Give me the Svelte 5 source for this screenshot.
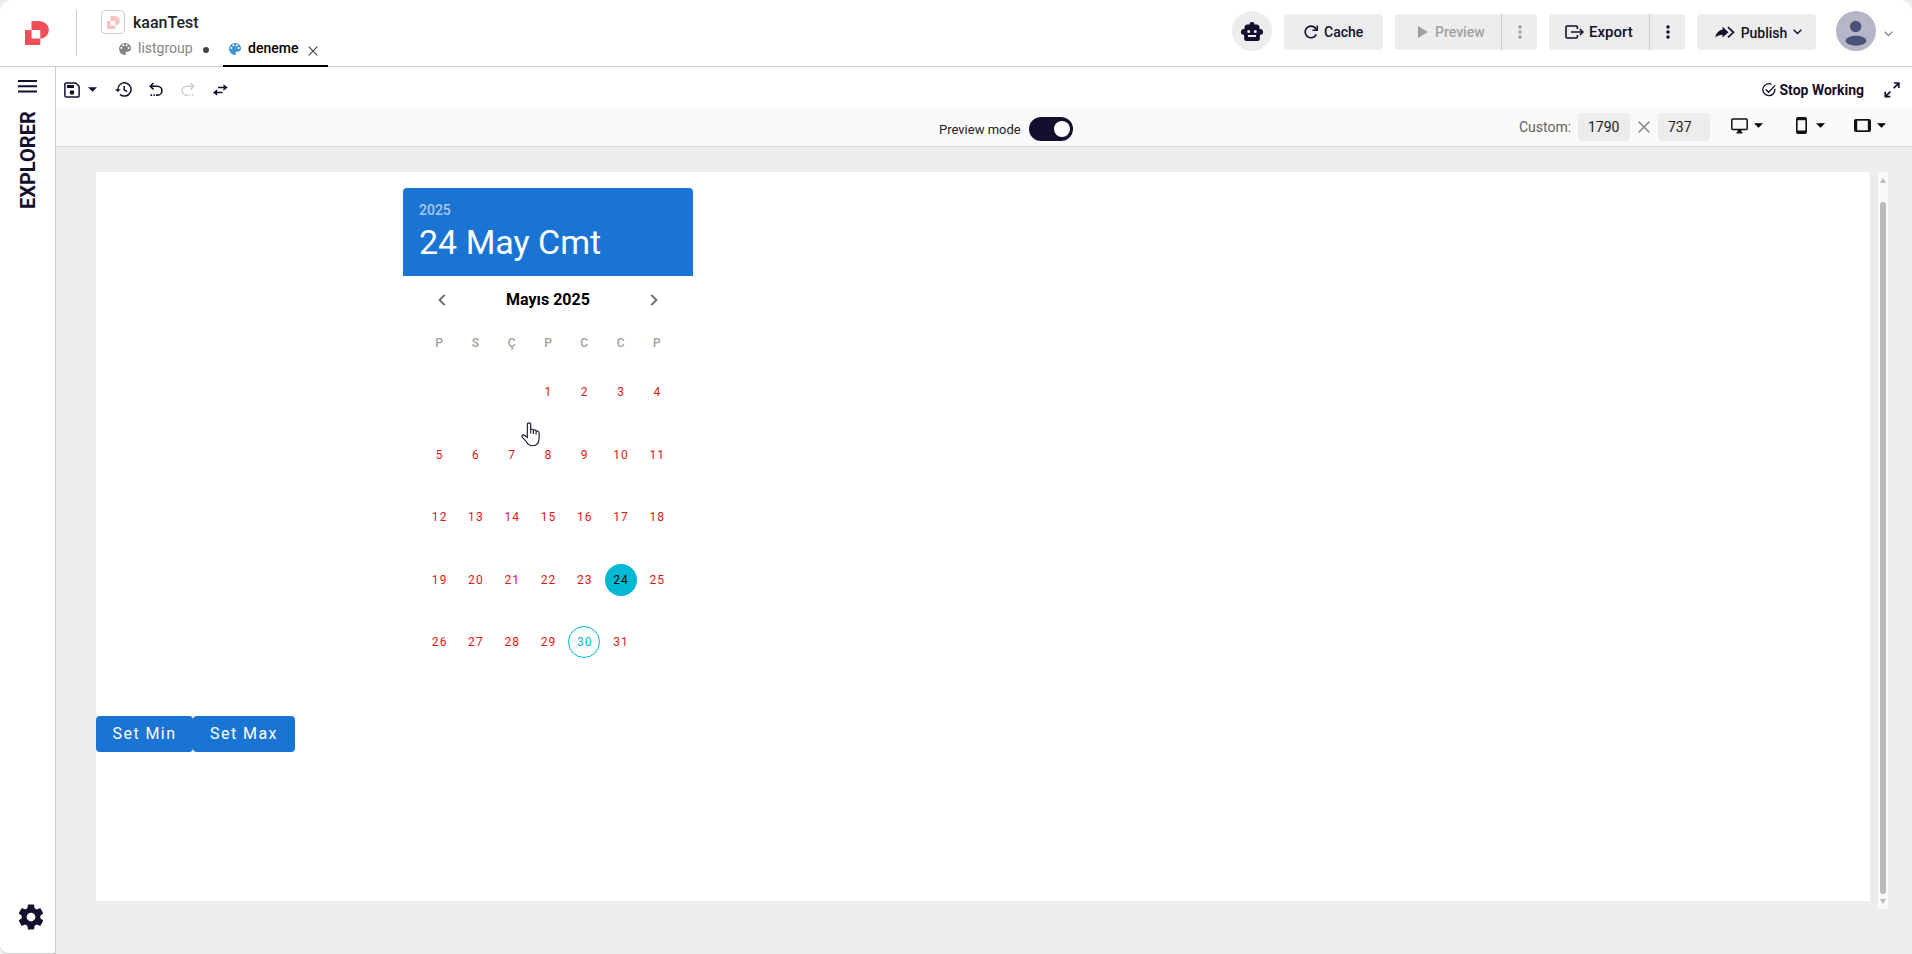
<script>
  const weekdays = ['P', 'S', 'Ç', 'P', 'C', 'C', 'P'];
  const days = [...Array(3).fill(null), ...Array.from({ length: 31 }, (_, i) => i + 1)];
  const palette =
    'M17.5,12A1.5,1.5 0 0,1 16,10.5A1.5,1.5 0 0,1 17.5,9A1.5,1.5 0 0,1 19,10.5A1.5,1.5 0 0,1 17.5,12M14.5,8A1.5,1.5 0 0,1 13,6.5A1.5,1.5 0 0,1 14.5,5A1.5,1.5 0 0,1 16,6.5A1.5,1.5 0 0,1 14.5,8M9.5,8A1.5,1.5 0 0,1 8,6.5A1.5,1.5 0 0,1 9.5,5A1.5,1.5 0 0,1 11,6.5A1.5,1.5 0 0,1 9.5,8M6.5,12A1.5,1.5 0 0,1 5,10.5A1.5,1.5 0 0,1 6.5,9A1.5,1.5 0 0,1 8,10.5A1.5,1.5 0 0,1 6.5,12M12,3A9,9 0 0,0 3,12A9,9 0 0,0 12,21A1.5,1.5 0 0,0 13.5,19.5C13.5,19.11 13.35,18.76 13.11,18.5C12.88,18.23 12.73,17.88 12.73,17.5A1.5,1.5 0 0,1 14.23,16H16A5,5 0 0,0 21,11C21,6.58 16.97,3 12,3Z';
  const cog =
    'M12,15.5A3.5,3.5 0 0,1 8.5,12A3.5,3.5 0 0,1 12,8.5A3.5,3.5 0 0,1 15.5,12A3.5,3.5 0 0,1 12,15.5M19.43,12.97C19.47,12.65 19.5,12.33 19.5,12C19.5,11.67 19.47,11.34 19.43,11L21.54,9.37C21.73,9.22 21.78,8.95 21.66,8.73L19.66,5.27C19.54,5.05 19.27,4.96 19.05,5.05L16.56,6.05C16.04,5.66 15.5,5.32 14.87,5.07L14.5,2.42C14.46,2.18 14.25,2 14,2H10C9.75,2 9.54,2.18 9.5,2.42L9.13,5.07C8.5,5.32 7.96,5.66 7.44,6.05L4.95,5.05C4.73,4.96 4.46,5.05 4.34,5.27L2.34,8.73C2.21,8.95 2.27,9.22 2.46,9.37L4.57,11C4.53,11.34 4.5,11.67 4.5,12C4.5,12.33 4.53,12.65 4.57,12.97L2.46,14.63C2.27,14.78 2.21,15.05 2.34,15.27L4.34,18.73C4.46,18.95 4.73,19.03 4.95,18.95L7.44,17.94C7.96,18.34 8.5,18.68 9.13,18.93L9.5,21.58C9.54,21.82 9.75,22 10,22H14C14.25,22 14.46,21.82 14.5,21.58L14.87,18.93C15.5,18.67 16.04,18.34 16.56,17.94L19.05,18.95C19.27,19.03 19.54,18.95 19.66,18.73L21.66,15.27C21.78,15.05 21.73,14.78 21.54,14.63L19.43,12.97Z';
</script>

{#snippet logo(size, color)}
  <svg width={size} height={size} viewBox="0 0 24 24" fill={color}>
    <path fill-rule="evenodd" d="M6.500 0H13C19.500 0 23.800 3.700 23.800 8.700S20 17.500 15.300 17.500V24H0V9H6.500zM6.500 9V17.500H15.300V9z" />
  </svg>
{/snippet}

{#snippet dots(color)}
  <svg width="4" height="14" viewBox="0 0 4 14" fill={color}>
    <circle cx="2" cy="2" r="1.750" /><circle cx="2" cy="7" r="1.750" /><circle cx="2" cy="12" r="1.750" />
  </svg>
{/snippet}

{#snippet caret(cls)}
  <svg class={cls} width="9" height="5" viewBox="0 0 9 5"><path d="M0 .3h9L4.500 4.800z" fill="currentColor" /></svg>
{/snippet}

{#snippet chevron(w)}
  <svg width={w} height="6" viewBox="0 0 9 6" fill="none" stroke="currentColor" stroke-width="1.400"><path d="M.7.8 4.500 4.600 8.300.8" /></svg>
{/snippet}

<div class="app">
  <header>
    <div class="brand">{@render logo(24, '#ef4f56')}</div>
    <div class="project">
      <div class="title-row">
        <span class="app-icon">{@render logo(13, '#f6c3c1')}</span>
        <span class="name">kaanTest</span>
      </div>
      <div class="tabs">
        <div class="tab">
          <svg width="16" height="16" viewBox="0 0 24 24" fill="#858585"><path d={palette} /></svg>
          <span>listgroup</span>
          <i class="dot"></i>
        </div>
        <div class="tab active">
          <svg width="16" height="16" viewBox="0 0 24 24" fill="#3e94d1"><path d={palette} /></svg>
          <span>deneme</span>
          <svg class="close" width="10" height="10" viewBox="0 0 10 10" stroke="#444" stroke-width="1.200"><path d="M.7.700l8.600 8.600M9.300.700.700 9.300" /></svg>
        </div>
      </div>
    </div>
    <div class="actions">
      <button class="round" aria-label="Assistant">
        <svg width="22" height="19" viewBox="0 0 22 19">
          <path fill="#130f2e" fill-rule="evenodd" d="M8.500 2.600A2.500 2.500 0 0 1 13.500 2.600H15.500A3 3 0 0 1 18.500 5.600V7H19.200A2.800 2.800 0 0 1 19.200 12.800H18.900V16.500A2.500 2.500 0 0 1 16.400 19H5.600A2.500 2.500 0 0 1 3.100 16.500V12.800H2.800A2.800 2.800 0 0 1 2.800 7H3.500V5.600A3 3 0 0 1 6.500 2.600zM7.700 8a1.500 1.500 0 1 0 0 3 1.500 1.500 0 0 0 0-3zM14.300 8a1.500 1.500 0 1 0 0 3 1.500 1.500 0 0 0 0-3zM7 13v2h8v-2z" />
        </svg>
      </button>
      <button class="btn cache">
        <svg width="14" height="14" viewBox="0 0 14 14" fill="none" stroke="#130f2e" stroke-width="1.700"><path d="M12.300 9.300A5.800 5.800 0 1 1 11.200 2.900L12.500 4.400" /><path d="M13.300.5v4.800H8.500" stroke-width="1.500" /></svg>
        <span>Cache</span>
      </button>
      <div class="btn split off">
        <div class="main">
          <svg width="10" height="12" viewBox="0 0 10 12"><path d="M0 0 10 6 0 12z" fill="#a0a0a0" /></svg>
          <span>Preview</span>
        </div>
        <div class="more">{@render dots('#a0a0a0')}</div>
      </div>
      <div class="btn split export">
        <div class="main">
          <svg width="19" height="14" viewBox="0 0 19 14" fill="none" stroke="#130f2e" stroke-width="1.600"><path d="M12.400 4V2.300A1.300 1.300 0 0 0 11.100 1H2.300A1.300 1.300 0 0 0 1 2.300v9.400A1.300 1.300 0 0 0 2.300 13h8.800a1.300 1.300 0 0 0 1.300-1.300V10M6 7h11.800M14.900 4l3 3-3 3" /></svg>
          <span>Export</span>
        </div>
        <div class="more">{@render dots('#130f2e')}</div>
      </div>
      <button class="btn publish">
        <svg width="20" height="13" viewBox="0 0 20 13"><path d="M7.500.8 13.500 6.300 7.500 11.600V8.700C4.500 8.700 2.200 9.400.3 11.700 1 7.600 3.500 4.300 7.500 3.800z" fill="#130f2e" /><path d="M13 1.200 18.500 6.300 13 11.400" fill="none" stroke="#130f2e" stroke-width="1.700" /></svg>
        <span>Publish</span>
        {@render chevron(9)}
      </button>
      <svg class="avatar" width="40" height="40" viewBox="0 0 40 40"><circle cx="20" cy="20" r="20" fill="#b5b7c8" /><circle cx="19.700" cy="15.500" r="5.700" fill="#4c5277" /><ellipse cx="20" cy="29.700" rx="10.500" ry="5" fill="#4c5277" /></svg>
      <span class="user-chevron">{@render chevron(9)}</span>
    </div>
  </header>

  <div class="body">
    <aside>
      <svg class="burger" width="19" height="13" viewBox="0 0 19 13" fill="#130f2e"><path d="M0 0h19v2H0zM0 5.200h19v2H0zM0 10.400h19v2H0z" /></svg>
      <span class="side-title">EXPLORER</span>
      <svg class="cog" width="30" height="30" viewBox="0 0 24 24" fill="#130f2e"><path d={cog} /></svg>
    </aside>

    <main>
      <div class="toolbar">
        <svg width="16" height="16" viewBox="0 0 16 16"><path d="M2.300.9h9.400l3.400 3.400v9.400a1.400 1.400 0 0 1-1.400 1.400H2.300a1.400 1.400 0 0 1-1.400-1.400V2.300A1.400 1.400 0 0 1 2.300.9z" fill="none" stroke="#130f2e" stroke-width="1.500" /><path d="M3 3h7v3H3z" fill="#130f2e" /><circle cx="8" cy="10.500" r="2.300" fill="#130f2e" /></svg>
        {@render caret('save-caret')}
        <svg class="history" width="17" height="15" viewBox="0 0 17 15" fill="none" stroke="#130f2e" stroke-width="1.500"><path d="M2.800 9V7.400A6.600 6.600 0 1 1 5 12.400" /><path d="M9.200 4v3.800l3 1.800" /><path d="M0 7.200h5.600L2.800 10z" fill="#130f2e" stroke="none" /></svg>
        <svg class="undo" width="14" height="15" viewBox="0 0 14 15" fill="none" stroke="#130f2e" stroke-width="1.600"><path d="M4.500 1 1.300 4.200 4.500 7.400M1.300 4.200H8.500a4.400 4.400 0 0 1 0 8.900H7" /><path d="M1.500 13.100H3M4.300 13.100h1.500" /></svg>
        <svg class="redo" width="14" height="15" viewBox="0 0 14 15" fill="none" stroke="#d0d0d0" stroke-width="1.600"><path d="M9.500 1l3.200 3.200-3.200 3.200M12.700 4.200H5.500a4.400 4.400 0 0 0 0 8.900H7" /><path d="M12.500 13.100H11M9.700 13.100H8.200" /></svg>
        <svg class="swap" width="15" height="12" viewBox="0 0 15 12" fill="#130f2e"><path d="M5 2.700h5.500V.2L14.700 3.500 10.500 6.800V4.200H5zM9.500 7.800H4.200V5.300L0 8.600l4.200 3.200V9.300h5.300z" /></svg>
        <div class="stop">
          <svg width="14" height="14" viewBox="0 0 14 14" fill="none" stroke="#130f2e" stroke-width="1.300"><path d="M12.800 5.800A6 6 0 1 1 9.500 1.300" /><path d="M3.600 6.200 6.600 9.200 13.200 2.400" /></svg>
          <span>Stop Working</span>
        </div>
        <svg class="expand" width="16" height="16" viewBox="0 0 16 16" fill="none" stroke="#130f2e" stroke-width="1.700"><path d="M9.800 1h5v5M14.600 1.300 9.700 6.200M1.300 9.800V14.700h5M1.500 14.500 6.400 9.600" /></svg>
      </div>

      <div class="previewbar">
        <div class="mode"><span>Preview mode</span><i class="switch"></i></div>
        <span class="custom">Custom:</span>
        <span class="size">1790</span>
        <svg class="times" width="12" height="12" viewBox="0 0 12 12" stroke="#8f8f8f" stroke-width="1.500"><path d="M.6.600l10.800 10.800M11.400.600.600 11.400" /></svg>
        <span class="size">737</span>
        <div class="devices">
          <svg width="17" height="16" viewBox="0 0 17 16"><rect x=".8" y="1" width="15.400" height="10.500" rx="1" fill="none" stroke="#111" stroke-width="1.500" /><path d="M6.500 12h4v2.300h1v1.200h-6v-1.200h1z" fill="#111" /></svg>
          {@render caret('c1')}
          <svg class="phone" width="11" height="17" viewBox="0 0 11 17"><rect width="11" height="17" rx="2" fill="#111" /><path d="M1.600 3.200h7.800v10.300H1.600z" fill="#fafafa" /></svg>
          {@render caret('c2')}
          <svg class="tablet" width="17" height="13" viewBox="0 0 17 13"><rect width="17" height="13" rx="2" fill="#111" /><path d="M3.200 1.700h10.600v9.600H3.200z" fill="#fafafa" /></svg>
          {@render caret('c1')}
        </div>
      </div>

      <div class="canvas">
        <section class="page">
          <div class="picker">
            <div class="picker-title">
              <div class="year">2025</div>
              <div class="date">24 May Cmt</div>
            </div>
            <div class="month">
              <svg width="8" height="12" viewBox="0 0 8 12" fill="none" stroke="#6c6c6c" stroke-width="1.900"><path d="M6.800.8 1.600 6l5.200 5.200" /></svg>
              <span>Mayıs 2025</span>
              <svg width="8" height="12" viewBox="0 0 8 12" fill="none" stroke="#6c6c6c" stroke-width="1.900"><path d="M1.200.8 6.400 6l-5.200 5.200" /></svg>
            </div>
            <div class="grid heads">
              {#each weekdays as d}<span>{d}</span>{/each}
            </div>
            <div class="grid days">
              {#each days as d}
                <span><b class:selected={d === 24} class:today={d === 30}>{d ?? ''}</b></span>
              {/each}
            </div>
          </div>
          <div class="buttons"><button class="min">Set Min</button><button class="max">Set Max</button></div>
          <svg class="cursor" width="20" height="25" viewBox="0 0 20 25"><path d="M6.300 15.500V2.600a1.700 1.700 0 0 1 3.400 0V7.500c1-.6 2.300-.3 2.700.6 1-.5 2.300-.2 2.700.9 1.400-.5 3 .2 3 1.900v5c0 5-2.500 7.800-6.500 7.800-3.600 0-5-1.400-6.600-4.500L1.200 15.200c-.8-1.500.3-2.600 1.600-2.200 1.300.4 2.500 1.800 3.500 2.500zM9.700 7v4.500M12.400 8v4M15.100 9v3.500" fill="#fff" stroke="#130f2e" stroke-width="1.100" /></svg>
        </section>
        <div class="scrollbar">
          <svg width="6" height="5" viewBox="0 0 6 5"><path d="M3 0 6 5H0z" fill="#b9b9b9" /></svg>
          <i></i>
          <svg width="6" height="5" viewBox="0 0 6 5"><path d="M0 0H6L3 5z" fill="#b9b9b9" /></svg>
        </div>
      </div>
    </main>
  </div>
</div>

<style>
  :global(body) { margin: 0; background: #ededed; }
  * { box-sizing: border-box; }
  svg { display: block; flex: none; }
  button { border: 0; padding: 0; font: inherit; color: inherit; letter-spacing: inherit; }
  .app { width: 1912px; height: 954px; display: flex; flex-direction: column; font-family: Roboto, sans-serif; color: #130f2e; background: #ededed; overflow: hidden; }

  header { height: 67px; flex: none; display: flex; background: #fff; border-bottom: 1px solid #ccc; border-radius: 12px 12px 0 0; }
  .brand { width: 77px; height: 46px; margin-top: 10px; padding: 11px 0 0 25px; border-right: 1px solid #ccc; }
  .project { padding: 10px 0 0 24px; }
  .title-row { display: flex; height: 24px; align-items: center; gap: 8px; }
  .app-icon { width: 24px; height: 24px; border: 1px solid #ccc; border-radius: 4px; display: grid; place-items: center; }
  .name { font-size: 16px; font-weight: 500; color: #222; }
  .tabs { display: flex; height: 33px; padding-left: 16px; }
  .tab { display: flex; align-items: center; height: 33px; padding-bottom: 3px; width: 106px; font-size: 14px; color: #858585; }
  .tab span { margin: -3px 0 0 5px; width: 54px; }
  .tab svg:first-child { margin-top: 0; }
  .dot { width: 6px; height: 6px; border-radius: 50%; background: #444; margin: 2px 0 0 11px; }
  .active { width: 105px; padding-left: 4px; padding-bottom: 1px; border-bottom: 2px solid #000; color: #000; font-weight: 500; }
  .active span { width: 51px; }
  .close { margin: 4px 0 0 9px; }

  .actions { margin-left: auto; width: 680px; display: flex; align-items: flex-start; padding-top: 14px; font-size: 14px; font-weight: 500; }
  .round { width: 40px; height: 40px; margin: -3px 12px 0 0; border-radius: 50%; background: #ededed; display: grid; place-items: center; }
  .btn { height: 36px; margin-right: 12px; border-radius: 4px; background: #ededed; display: flex; align-items: center; }
  .cache { width: 99px; padding-left: 20px; gap: 6px; }
  .split { width: 142px; }
  .main { display: flex; align-items: center; height: 36px; width: 107px; border-right: 1px solid #ccc; padding-left: 23px; gap: 7px; }
  .more { flex: 1; display: grid; place-items: center; }
  .off { color: #a0a0a0; }
  .export { width: 136px; font-size: 15px; }
  .export .main { width: 101px; padding-left: 16px; gap: 5px; }
  .publish { width: 119px; padding-left: 18px; gap: 4px; }
  .publish span { width: 50px; margin-top: 2px; }
  .avatar { margin: -3px 8px 0; }
  .user-chevron { color: #8d8d8d; margin-top: 17px; }

  .body { flex: 1; display: flex; min-height: 0; }
  aside { width: 56px; background: #fff; border-right: 1px solid #ccc; border-bottom: 1px solid #ccc; border-bottom-left-radius: 8px; display: flex; flex-direction: column; }
  .burger { margin: 13px 0 0 18px; }
  .side-title { writing-mode: vertical-rl; transform: rotate(180deg); font-size: 20px; font-weight: 700; line-height: 24px; width: 24px; height: 98px; margin: 18px 0 0 16px; white-space: nowrap; }
  .cog { margin: auto 0 21px 16px; }
  main { flex: 1; display: flex; flex-direction: column; }
  .toolbar { height: 40px; background: #fff; display: flex; align-items: center; padding: 5px 12px 0 8px; }
  :global(.save-caret) { margin: 0 0 0 8px; }
  .history { margin-left: 18px; }
  .undo { margin-left: 17px; }
  .redo { margin-left: 18px; }
  .swap { margin-left: 18px; }
  .stop { margin-left: auto; display: flex; align-items: center; gap: 3px; font-size: 14px; font-weight: 700; }
  .expand { margin-left: 20px; }

  .previewbar { height: 40px; background: #fafafa; border-bottom: 1px solid #dcdcdc; display: flex; align-items: center; font-size: 14px; color: #222; }
  .mode { margin-left: 883px; width: 580px; display: flex; align-items: center; gap: 8px; padding-top: 5px; font-size: 13px; }
  .mode span { width: 82px; white-space: nowrap; }
  .switch { width: 44px; height: 24px; border-radius: 12px; background: #130f2e; padding: 4px 3px 4px 25px; display: block; }
  .switch::before { content: ''; display: block; width: 16px; height: 16px; border-radius: 50%; background: #fff; }
  .custom { width: 59px; color: #616161; }
  .size { width: 52px; height: 28px; line-height: 28px; border-radius: 4px; background: #ededed; padding-left: 10px; }
  .times { margin: 0 8px; }
  .devices { display: flex; align-items: center; margin: -2px 0 0 21px; color: #000; }
  :global(.c1) { margin-left: 6px; }
  :global(.c2) { margin-left: 9px; }
  .phone { margin-left: 33px; }
  .tablet { margin-left: 29px; }

  .canvas { flex: 1; display: flex; align-items: flex-start; padding: 25px 0 0 40px; }
  .page { position: relative; width: 1774px; height: 729px; background: #fff; padding-top: 16px; }
  .picker { width: 290px; height: 528px; margin-left: 307px; }
  .picker-title { height: 88px; border-radius: 4px 4px 0 0; background: #1a74d3; color: #fff; padding: 14px 16px 0; }
  .year { font-size: 14px; line-height: 16px; font-weight: 500; opacity: .6; }
  .date { font-size: 34px; line-height: 40px; margin-top: 4px; }
  .month { height: 46px; display: flex; align-items: center; justify-content: space-between; padding: 1px 35px 0; color: #000; font-size: 16px; font-weight: 700; }
  .grid { display: grid; grid-template-columns: repeat(7, 36.286px); padding-left: 18px; text-align: center; font-size: 12px; }
  .heads { margin-top: 2px; height: 38px; line-height: 38px; font-weight: 500; color: #9e9e9e; }
  .days { grid-auto-rows: 62.500px; color: #e31616; }
  .days span { display: grid; place-items: center; }
  .days b { width: 32px; height: 32px; border-radius: 50%; line-height: 32px; font-weight: 400; letter-spacing: 1.070px; padding-left: 1px; margin-top: -2px; }
  .days b.selected { background: #00b8d4; color: #000; }
  .days b.today { border: 1px solid #00b8d4; color: #00b8d4; line-height: 30px; }
  .buttons { display: flex; color: #fff; font-size: 16px; letter-spacing: 1.430px; }
  .buttons button { height: 36px; border-radius: 4px; background: #1a74d3; padding-bottom: 1px; }
  .min { width: 97px; }
  .max { width: 102px; }
  .cursor { position: absolute; left: 425px; top: 250px; }
  .scrollbar { width: 10px; height: 737px; margin-left: 8px; background: #fafafa; display: flex; flex-direction: column; align-items: center; padding: 6px 0 5px; }
  .scrollbar i { width: 6px; border-radius: 3px; background: #b9b9b9; height: 692px; margin: 19px 0 5px; }
</style>
